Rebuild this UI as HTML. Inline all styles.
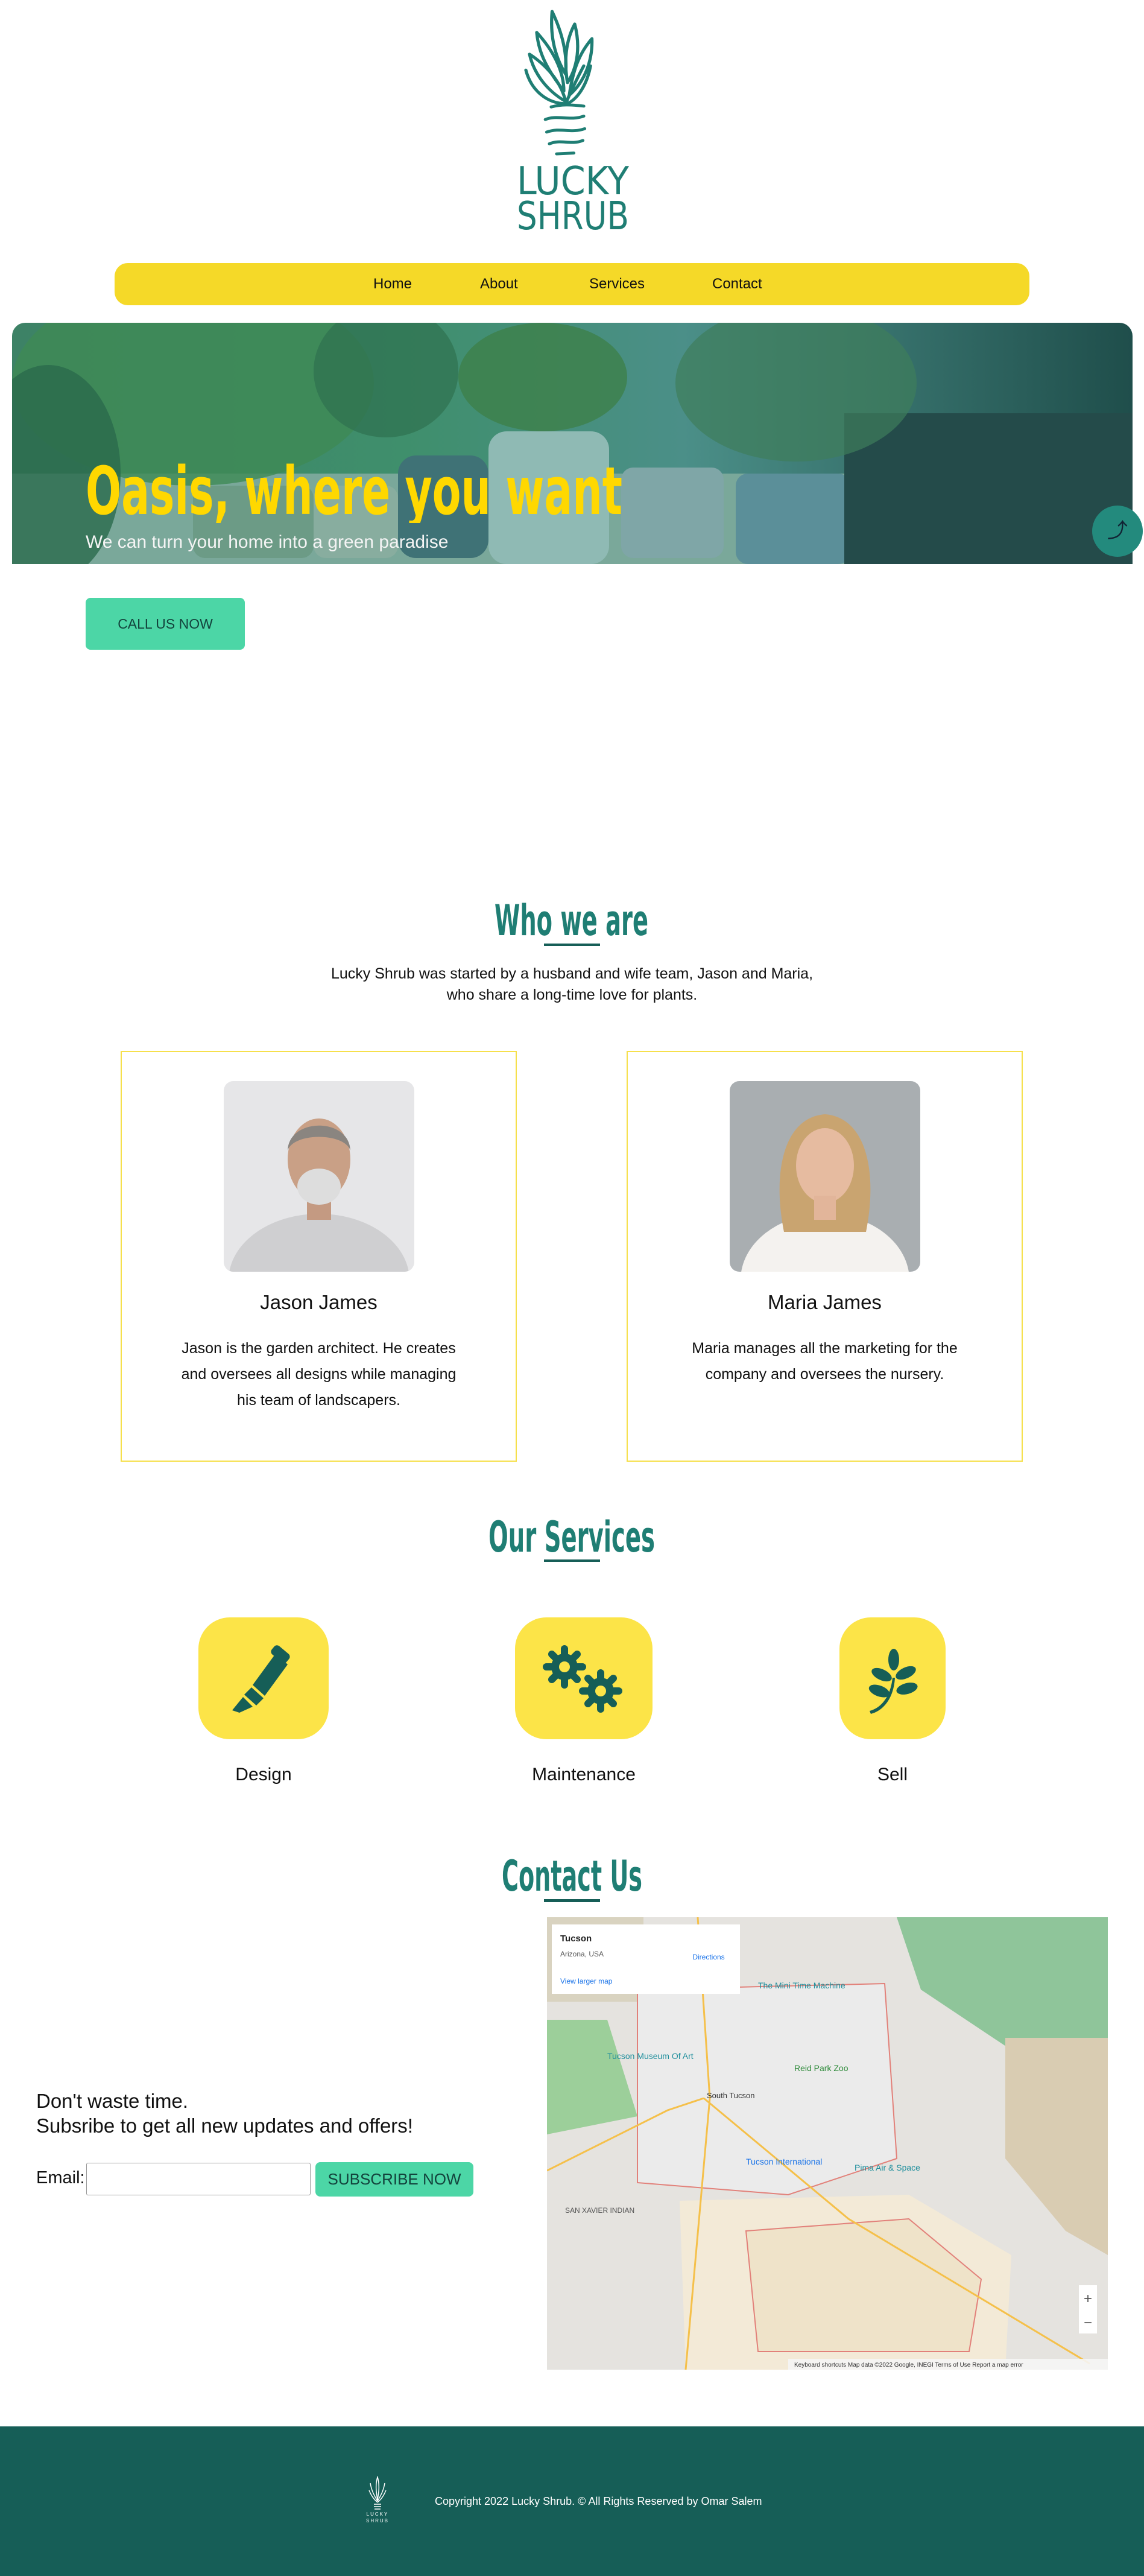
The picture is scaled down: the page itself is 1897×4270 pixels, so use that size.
<!DOCTYPE html>
<html><head><meta charset="utf-8">
<style>
*{margin:0;padding:0;box-sizing:border-box}
body{width:1897px;height:4270px;position:relative;background:#fff;font-family:"Liberation Sans",sans-serif;color:#111;overflow:hidden}
.abs{position:absolute}
.nav{left:190px;top:436px;width:1517px;height:70px;background:#f5d928;border-radius:22px}
.nav span{position:absolute;top:21px;font-size:24px;color:#111}
.hero{left:20px;top:535px;width:1858px;height:400px;border-radius:22px 22px 0 0;overflow:hidden}
.btn{background:#4cd6a6;border-radius:8px;color:#13443d;text-align:center}
.card{border:2px solid #f6e04c;width:657px;height:681px;top:1742px}
.photo{position:absolute;left:169px;top:48px;width:316px;height:316px;border-radius:16px;overflow:hidden}
.name{position:absolute;left:0;width:100%;text-align:center;top:396px;font-size:33px}
.desc{position:absolute;left:0;width:100%;text-align:center;top:470px;font-size:25px;line-height:43px}
.ib{background:#fce448;border-radius:52px;top:2681px;height:202px}
.lbl{top:2925px;font-size:30px;text-align:center}
</style></head><body>

<!-- logo -->
<svg class="abs" style="left:863px;top:12px" width="165" height="250" viewBox="0 0 220 360" preserveAspectRatio="none">
<g fill="none" stroke="#1f7e74" stroke-width="7" stroke-linecap="round" stroke-linejoin="round">
<path d="M70 10 C66 60 72 110 100 160 C104 110 92 60 70 10Z"/>
<path d="M36 60 C40 110 60 150 96 200 C96 150 70 100 36 60Z"/>
<path d="M120 40 C100 80 96 130 104 180 C128 140 132 90 120 40Z"/>
<path d="M158 75 C130 110 116 150 108 210 C140 180 160 130 158 75Z"/>
<path d="M20 112 C30 160 60 200 100 225 C90 180 60 140 20 112Z"/>
<path d="M12 150 C24 200 60 230 100 230"/>
<path d="M155 140 C146 190 124 220 104 230"/>
<path d="M140 140 C120 180 108 210 100 230"/>
<path d="M68 238 C90 232 110 232 140 236"/>
<path d="M55 268 C80 256 110 272 140 260"/>
<path d="M58 298 C90 286 110 302 142 290"/>
<path d="M64 326 C90 314 110 330 138 318"/>
<path d="M80 350 L118 348"/>
</g>
</svg>
<svg class="abs" style="left:850px;top:268px" width="200" height="120">
<g font-family="DejaVu Sans Condensed,Liberation Sans,sans-serif" font-size="64" fill="#1f7e74">
<text x="7" y="54" textLength="186" lengthAdjust="spacingAndGlyphs">LUCKY</text>
<text x="7" y="112" textLength="186" lengthAdjust="spacingAndGlyphs">SHRUB</text>
</g></svg>

<div class="abs nav">
<span style="left:429px">Home</span>
<span style="left:606px">About</span>
<span style="left:787px">Services</span>
<span style="left:991px">Contact</span>
</div>

<!-- hero -->
<div class="abs hero">
<svg width="1858" height="400" viewBox="0 0 1858 400">
<defs><linearGradient id="hg" x1="0" x2="1" y1="0" y2="0">
<stop offset="0" stop-color="#3d8266"/><stop offset="0.35" stop-color="#3f8f6c"/><stop offset="0.6" stop-color="#4b8f88"/><stop offset="1" stop-color="#1f4e4b"/></linearGradient></defs>
<rect width="1858" height="400" fill="url(#hg)"/>
<rect x="0" y="250" width="1858" height="150" fill="#7aa89a"/>
<rect x="790" y="180" width="200" height="220" rx="30" fill="#8fbab4"/>
<rect x="640" y="220" width="150" height="170" rx="30" fill="#3f7276"/>
<rect x="1010" y="240" width="170" height="150" rx="20" fill="#7fa6a7"/>
<rect x="1200" y="250" width="190" height="150" rx="20" fill="#5b8f99"/>
<rect x="1380" y="150" width="480" height="250" fill="#244b4a"/>
<rect x="500" y="270" width="140" height="120" rx="20" fill="#88ad9f"/>
<rect x="300" y="270" width="200" height="120" rx="20" fill="#6c9b86"/>
<ellipse cx="300" cy="100" rx="300" ry="170" fill="#3f8a55" opacity=".8"/>
<ellipse cx="880" cy="90" rx="140" ry="90" fill="#3d7f4a" opacity=".8"/>
<ellipse cx="1300" cy="100" rx="200" ry="130" fill="#3f7d5b" opacity=".7"/>
<ellipse cx="620" cy="80" rx="120" ry="110" fill="#2f7050" opacity=".7"/>
<ellipse cx="60" cy="250" rx="120" ry="180" fill="#2b6a4c" opacity=".8"/>
</svg>
</div>
<svg class="abs" style="left:138px;top:752px" width="900" height="115"><text x="4" y="100" textLength="890" lengthAdjust="spacingAndGlyphs" font-family="DejaVu Sans Condensed,Liberation Sans,sans-serif" font-weight="bold" font-size="110" fill="#ffd800">Oasis, where you want</text></svg>
<div class="abs" style="left:142px;top:882px;font-size:30px;color:#f4f4f4">We can turn your home into a green paradise</div>
<div class="abs" style="left:1811px;top:838px;width:84px;height:85px;border-radius:50%;background:#238a7d;color:#123;font-size:34px;text-align:center;line-height:85px">⤴</div>

<div class="abs btn" style="left:142px;top:991px;width:264px;height:86px;line-height:86px;font-size:23px">CALL US NOW</div>

<!-- who we are -->
<svg class="abs" style="left:810px;top:1490px" width="280" height="70"><text x="10" y="60" textLength="255" lengthAdjust="spacingAndGlyphs" font-family="DejaVu Sans Condensed,Liberation Sans,sans-serif" font-weight="bold" font-size="70" fill="#1f7e74">Who we are</text></svg>
<div class="abs" style="left:902px;top:1564px;width:93px;height:4px;background:#165e57"></div>
<div class="abs" style="left:0;width:1897px;top:1597px;text-align:center;font-size:25px;line-height:35px">Lucky Shrub was started by a husband and wife team, Jason and Maria,<br>who share a long-time love for plants.</div>

<div class="abs card" style="left:200px">
<div class="photo" style="background:#e6e6e8">
<svg width="316" height="316"><ellipse cx="158" cy="330" rx="150" ry="110" fill="#cfcfd1"/><rect x="138" y="180" width="40" height="50" fill="#c49a82"/><ellipse cx="158" cy="130" rx="52" ry="68" fill="#c9a086"/><ellipse cx="158" cy="175" rx="36" ry="30" fill="#ddd"/><path d="M106 115 C108 60 208 60 210 115 C200 85 116 85 106 115Z" fill="#8a8580"/></svg>
</div>
<div class="name">Jason James</div>
<div class="desc">Jason is the garden architect. He creates<br>and oversees all designs while managing<br>his team of landscapers.</div>
</div>
<div class="abs card" style="left:1039px">
<div class="photo" style="background:#a9aeb1">
<svg width="316" height="316"><ellipse cx="158" cy="330" rx="140" ry="110" fill="#f4f2ef"/><path d="M90 250 C70 150 90 60 158 55 C226 60 246 150 226 250Z" fill="#c9a470"/><ellipse cx="158" cy="140" rx="48" ry="62" fill="#e6bba0"/><rect x="140" y="190" width="36" height="40" fill="#e2b59a"/></svg>
</div>
<div class="name">Maria James</div>
<div class="desc">Maria manages all the marketing for the<br>company and oversees the nursery.</div>
</div>

<!-- services -->
<svg class="abs" style="left:800px;top:2512px" width="300" height="70"><text x="10" y="60" textLength="276" lengthAdjust="spacingAndGlyphs" font-family="DejaVu Sans Condensed,Liberation Sans,sans-serif" font-weight="bold" font-size="70" fill="#1f7e74">Our Services</text></svg>
<div class="abs" style="left:902px;top:2585px;width:93px;height:4px;background:#165e57"></div>

<div class="abs ib" style="left:329px;width:216px"><svg width="216" height="202" viewBox="0 0 216 202"><g fill="#165e57"><path d="M128 60 L148 78 L110 130 L90 112Z"/><path d="M88 116 L108 134 L96 146 L76 128Z"/><path d="M74 132 L90 148 L68 158 L56 154Z"/><rect x="120" y="52" width="32" height="18" rx="6" transform="rotate(40 136 61)"/></g></svg></div>
<div class="abs ib" style="left:854px;width:228px"><svg width="228" height="202" viewBox="0 0 228 202">
<g fill="#165e57"><circle cx="82" cy="82" r="22"/><circle cx="142" cy="122" r="22"/>
<g stroke="#165e57" stroke-width="12" stroke-linecap="round"><path d="M82 52 V112 M52 82 H112 M61 61 L103 103 M103 61 L61 103"/><path d="M142 92 V152 M112 122 H172 M121 101 L163 143 M163 101 L121 143"/></g></g>
<circle cx="82" cy="82" r="9" fill="#fce448"/><circle cx="142" cy="122" r="9" fill="#fce448"/></svg></div>
<div class="abs ib" style="left:1392px;width:176px"><svg width="176" height="202" viewBox="0 0 176 202"><g fill="#165e57"><path d="M50 155 C70 150 85 130 88 100 L92 100 C90 135 72 155 52 160Z"/><ellipse cx="90" cy="70" rx="9" ry="18"/><ellipse cx="70" cy="95" rx="18" ry="9" transform="rotate(25 70 95)"/><ellipse cx="110" cy="92" rx="18" ry="9" transform="rotate(-25 110 92)"/><ellipse cx="66" cy="122" rx="18" ry="9" transform="rotate(20 66 122)"/><ellipse cx="112" cy="118" rx="18" ry="9" transform="rotate(-15 112 118)"/></g></svg></div>
<div class="abs lbl" style="left:337px;width:200px">Design</div>
<div class="abs lbl" style="left:818px;width:300px">Maintenance</div>
<div class="abs lbl" style="left:1380px;width:200px">Sell</div>

<!-- contact -->
<svg class="abs" style="left:820px;top:3074px" width="260" height="70"><text x="12" y="60" textLength="233" lengthAdjust="spacingAndGlyphs" font-family="DejaVu Sans Condensed,Liberation Sans,sans-serif" font-weight="bold" font-size="70" fill="#1f7e74">Contact Us</text></svg>
<div class="abs" style="left:902px;top:3148px;width:93px;height:5px;background:#165e57"></div>

<div class="abs" style="left:60px;top:3462px;font-size:33px;line-height:41px">Don't waste time.<br>Subsribe to get all new updates and offers!</div>
<div class="abs" style="left:60px;top:3594px;font-size:29px">Email:</div>
<div class="abs" style="left:143px;top:3585px;width:372px;height:54px;border:1px solid #999;border-radius:3px"></div>
<div class="abs btn" style="left:523px;top:3584px;width:262px;height:57px;line-height:57px;font-size:26px">SUBSCRIBE NOW</div>

<svg class="abs" style="left:907px;top:3178px" width="930" height="750" viewBox="0 0 930 750">
<rect width="930" height="750" fill="#e5e3df"/>
<path d="M580 0 H930 V220 H770 L620 120 Z" fill="#8fc59a"/>
<path d="M760 200 H930 V560 L860 520 L760 400Z" fill="#d9ccb2"/>
<path d="M0 170 L100 170 L150 330 L0 360Z" fill="#9ccf9a"/>
<path d="M0 0 H160 V140 H0Z" fill="#d9d3c0"/>
<path d="M220 470 L600 460 L770 560 L760 750 L230 750Z" fill="#f3ead7"/>
<path d="M330 520 L600 500 L720 600 L700 720 L350 720Z" fill="#efe3c9" stroke="#e2817a" stroke-width="2"/>
<path d="M150 120 L560 110 L580 400 L400 460 L150 440Z" fill="#ebebeb" stroke="#e2817a" stroke-width="2"/>
<g stroke="#f5c04a" stroke-width="3" fill="none"><path d="M250 0 L270 300 L230 750"/><path d="M260 300 L500 500 L900 740"/><path d="M0 420 L200 320 L260 300"/></g>
<rect x="8" y="12" width="312" height="115" fill="#fff"/>
<text x="22" y="40" font-family="Liberation Sans" font-size="15" font-weight="bold" fill="#222">Tucson</text>
<text x="22" y="65" font-family="Liberation Sans" font-size="12" fill="#555">Arizona, USA</text>
<text x="22" y="110" font-family="Liberation Sans" font-size="12" fill="#1a73e8">View larger map</text>
<text x="268" y="70" font-family="Liberation Sans" font-size="12" fill="#1a73e8" text-anchor="middle">Directions</text>
<text x="350" y="118" font-family="Liberation Sans" font-size="14" fill="#1e8e9c">The Mini Time Machine</text>
<text x="100" y="235" font-family="Liberation Sans" font-size="14" fill="#1e8e9c">Tucson Museum Of Art</text>
<text x="410" y="255" font-family="Liberation Sans" font-size="14" fill="#2e8b3a">Reid Park Zoo</text>
<text x="265" y="300" font-family="Liberation Sans" font-size="13" fill="#333">South Tucson</text>
<text x="330" y="410" font-family="Liberation Sans" font-size="14" fill="#1a73e8">Tucson International</text>
<text x="510" y="420" font-family="Liberation Sans" font-size="14" fill="#1e8e9c">Pima Air &amp; Space</text>
<text x="30" y="490" font-family="Liberation Sans" font-size="12" fill="#555">SAN XAVIER INDIAN</text>
<rect x="882" y="610" width="30" height="80" fill="#fff"/>
<text x="897" y="640" font-family="Liberation Sans" font-size="24" fill="#555" text-anchor="middle">+</text>
<text x="897" y="680" font-family="Liberation Sans" font-size="24" fill="#555" text-anchor="middle">−</text>
<rect x="400" y="732" width="530" height="18" fill="#f5f5f5" opacity=".9"/>
<text x="410" y="745" font-family="Liberation Sans" font-size="10" fill="#333">Keyboard shortcuts   Map data ©2022 Google, INEGI   Terms of Use   Report a map error</text>
</svg>

<!-- footer -->
<div class="abs" style="left:0;top:4022px;width:1897px;height:248px;background:#165e57"></div>
<svg class="abs" style="left:606px;top:4104px" width="40" height="80" viewBox="0 0 40 80"><g fill="none" stroke="#fff" stroke-width="1.5"><path d="M20 2 C16 15 18 28 20 40 C22 28 24 15 20 2Z M8 12 C10 25 15 33 20 42 M32 12 C30 25 25 33 20 42 M6 24 C10 34 15 40 20 44 M34 24 C30 34 25 40 20 44 M14 47 H26 M14 51 H26 M15 55 H25"/></g><text x="20" y="66" font-family="Liberation Sans" font-size="8" fill="#fff" text-anchor="middle" letter-spacing="2">LUCKY</text><text x="20" y="77" font-family="Liberation Sans" font-size="8" fill="#fff" text-anchor="middle" letter-spacing="2">SHRUB</text></svg>
<div class="abs" style="left:721px;top:4136px;font-size:18px;color:#fff">Copyright 2022 Lucky Shrub. © All Rights Reserved by Omar Salem</div>
</body></html>
